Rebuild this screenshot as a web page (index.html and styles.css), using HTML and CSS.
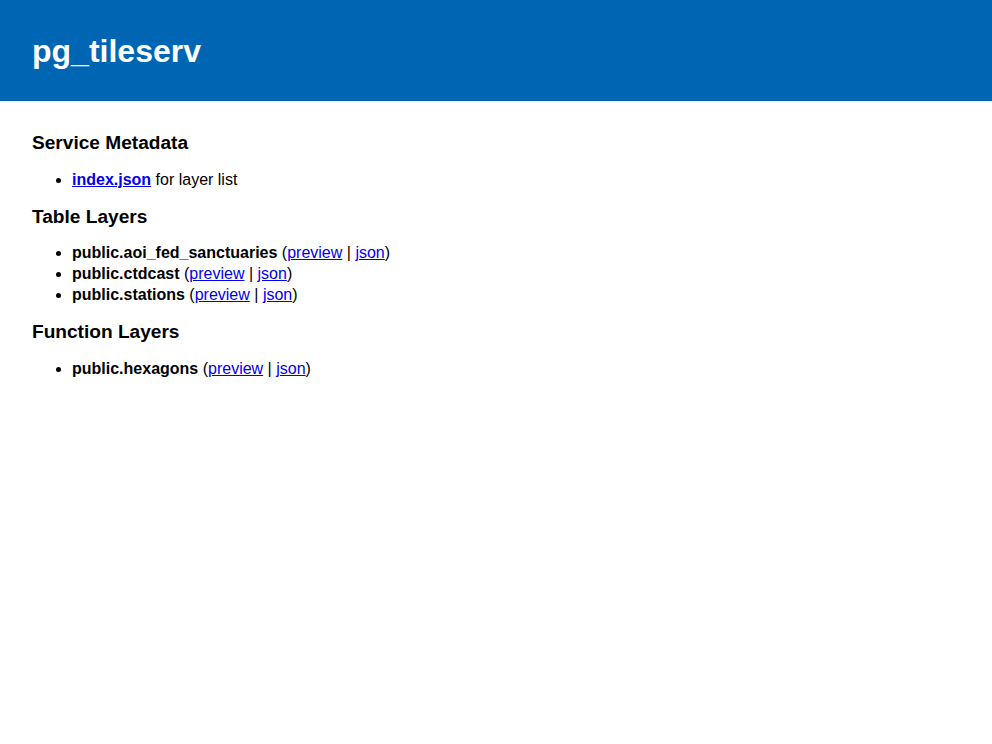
FILE: index.html
```html
<!DOCTYPE html>
<html>
<head>
<meta charset="utf-8">
<title>pg_tileserv</title>
<link rel="stylesheet" href="styles.css">
</head>
<body>
<header class="banner">
  <h1 class="title">pg_tileserv</h1>
</header>
<main class="content">
  <h3 class="section">Service Metadata</h3>
  <ul class="list">
    <li><a class="strong-link" href="#">index.json</a> for layer list</li>
  </ul>
  <h3 class="section">Table Layers</h3>
  <ul class="list">
    <li><b>public.aoi_fed_sanctuaries</b> (<a href="#">preview</a> | <a href="#">json</a>)</li>
    <li><b>public.ctdcast</b> (<a href="#">preview</a> | <a href="#">json</a>)</li>
    <li><b>public.stations</b> (<a href="#">preview</a> | <a href="#">json</a>)</li>
  </ul>
  <h3 class="section">Function Layers</h3>
  <ul class="list">
    <li><b>public.hexagons</b> (<a href="#">preview</a> | <a href="#">json</a>)</li>
  </ul>
</main>
</body>
</html>
```

FILE: styles.css
```css
html, body {
  margin: 0;
  padding: 0;
  background: #fff;
}
body {
  font-family: "Liberation Sans", Arial, sans-serif;
  font-size: 16px;
  color: #000;
}
.banner {
  background: #0066b3;
  height: 101px;
  display: flex;
  align-items: center;
  padding: 0 32px;
  box-sizing: border-box;
}
.title {
  margin: 0;
  color: #fff;
  font-size: 32px;
  font-weight: bold;
  line-height: 37px;
  padding-top: 2px;
}
.content {
  padding: 31px 32px 0;
}
.section {
  font-size: 19.1px;
  font-weight: bold;
  line-height: 22px;
  margin: 0;
}
.list {
  margin: 14.5px 0 16px;
  padding-left: 40px;
  line-height: 21px;
}
.list a {
  color: #0000ee;
}
.strong-link {
  font-weight: bold;
}
```
